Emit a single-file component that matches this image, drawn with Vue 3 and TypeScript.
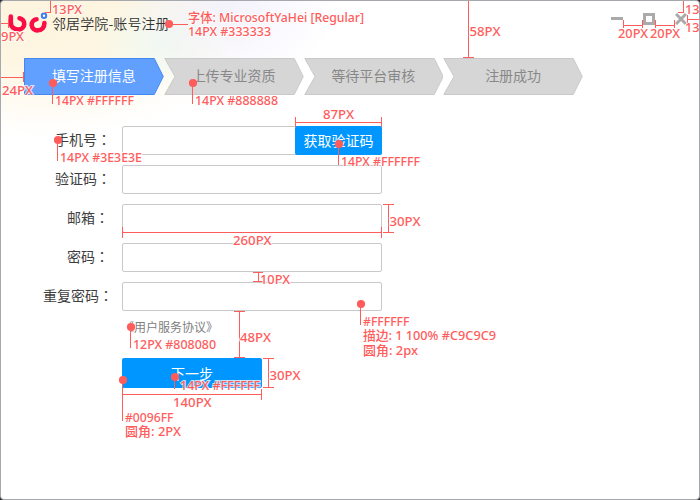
<script setup lang="ts">
interface Step { label: string; active?: boolean }
interface Field { label: string; shift: number; code?: boolean }
interface Note { x: number; y: number; w?: number; text: string }

const steps: Step[] = [
  { label: '填写注册信息', active: true },
  { label: '上传专业资质' },
  { label: '等待平台审核' },
  { label: '注册成功' },
]

const fields: Field[] = [
  { label: '手机号', shift: 2, code: true },
  { label: '验证码', shift: 2 },
  { label: '邮箱', shift: 4 },
  { label: '密码', shift: 4 },
  { label: '重复密码', shift: 0 },
]

const guides: string[] = [
  'M45 .5H55M50.5 0V12M45 12.5H51',
  'M0 23.5H8M8.5 19V28',
  'M0 77.5H24M23.5 72V82M.5 72V82',
  'M463 .5H474M463 57.5H474M468.5 0V58',
  'M623.5 20V28M642.5 20V28M623 25.5H643',
  'M655.5 20V28M674.5 20V28M655 25.5H675',
  'M678 .5H689M678 12.5H684M683.5 0V13',
  'M687.5 15V24M687 19.5H700',
  'M295.5 117V127M381.5 117V127M295 122.5H382',
  'M383 204.5H394M383 232.5H394M388.5 204V233',
  'M122 232.5H382M122.5 227V238M381.5 227V238',
  'M253 272.5H263M253 281.5H263M258.5 272V282',
  'M234 311.5H245M234 357.5H245M239.5 311V358',
  'M263 358.5H274M263 387.5H274M268.5 358V388',
  'M122 394.5H262M261.5 389V400',
  'M169 24.5H188',
  'M52.5 83V104M192.5 83V104M57.5 140V161M338.5 144V165',
  'M360.5 304V325M130.5 327V348M174.5 377V389M122.5 380V421',
]

const dots: [number, number][] = [
  [169, 24], [53, 83], [193, 83], [58, 140], [339, 144],
  [361, 304], [131, 327], [175, 377], [123, 380],
]

const notes: Note[] = [
  { x: 52, y: 13.5, w: 30, text: '13PX' },
  { x: 1, y: 40.5, w: 23, text: '9PX' },
  { x: 2, y: 94.5, w: 31, text: '24PX' },
  { x: 188, y: 22, w: 176, text: '字体: MicrosoftYaHei [Regular]' },
  { x: 188, y: 35.5, w: 83, text: '14PX #333333' },
  { x: 55, y: 104.5, w: 79, text: '14PX #FFFFFF' },
  { x: 195, y: 104.5, w: 83, text: '14PX #888888' },
  { x: 469.5, y: 35.5, w: 31, text: '58PX' },
  { x: 618, y: 37.5, w: 30, text: '20PX' },
  { x: 650, y: 37.5, w: 30, text: '20PX' },
  { x: 685, y: 13.5, w: 30, text: '13PX' },
  { x: 685, y: 31.5, w: 30, text: '13PX' },
  { x: 60, y: 161.5, w: 82, text: '14PX #3E3E3E' },
  { x: 323, y: 118.5, w: 31, text: '87PX' },
  { x: 341, y: 165.5, w: 79, text: '14PX #FFFFFF' },
  { x: 389.5, y: 225.5, w: 31, text: '30PX' },
  { x: 233, y: 244.5, w: 38.5, text: '260PX' },
  { x: 260, y: 283.5, w: 30, text: '10PX' },
  { x: 363, y: 325.5, w: 46.5, text: '#FFFFFF' },
  { x: 363, y: 339.5, w: 133, text: '描边: 1 100% #C9C9C9' },
  { x: 363, y: 355, w: 55, text: '圆角: 2px' },
  { x: 240, y: 341.5, w: 31, text: '48PX' },
  { x: 133, y: 348.5, w: 83, text: '12PX #808080' },
  { x: 269.5, y: 379.5, w: 31, text: '30PX' },
  { x: 180, y: 389.5, w: 80, text: '14PX #FFFFFF' },
  { x: 173, y: 406.5, w: 38.5, text: '140PX' },
  { x: 125, y: 421.5, w: 48.5, text: '#0096FF' },
  { x: 125, y: 435.5, w: 56, text: '圆角: 2PX' },
]
</script>

<template>
  <main class="window">
    <header class="titlebar">
      <svg class="logo" width="40" height="24" viewBox="0 0 40 24">
        <g fill="none" stroke="#fb0d45" stroke-width="4.600" stroke-linecap="round" stroke-linejoin="round">
          <path d="M2.800 6.500V12.500C2.800 17 6 19.500 11 19.500A5.700 5.700 0 0 0 11.500 8.200" />
          <path d="M28.500 9.300A5.500 5.500 0 1 0 30 20.300C34 20.300 36.400 17.500 36.400 13" />
        </g>
        <circle cx="36" cy="5.700" r="2.200" fill="#fff" stroke="#3c7df5" stroke-width="2" />
      </svg>
      <h1 class="title">邻居学院-账号注册</h1>
      <div class="controls">
        <svg width="12" height="12" viewBox="0 0 12 12"><path d="M0 5.500H12" /></svg>
        <svg width="12" height="12" viewBox="0 0 12 12"><rect x="1.500" y="1.500" width="9" height="9" /></svg>
        <svg width="12" height="12" viewBox="0 0 12 12"><path d="M1 1 11 11M11 1 1 11" /></svg>
      </div>
    </header>

    <nav class="steps">
      <div v-for="(step, i) in steps" :key="step.label" class="step" :class="{ active: step.active }">
        <svg class="shape" viewBox="0 0 140 37" preserveAspectRatio="none">
          <path :d="i === 0 ? 'M.5 .5H130.500L139.500 18.500 130.500 36.500H.5Z' : 'M.8 .5H130.500L139.500 18.500 130.500 36.500H.8L11 18.500Z'" />
        </svg>
        <span>{{ step.label }}</span>
      </div>
    </nav>

    <form class="form" @submit.prevent>
      <div v-for="f in fields" :key="f.label" class="row">
        <label :style="{ paddingRight: f.shift + 'px' }">{{ f.label }}<span class="colon">：</span></label>
        <div class="field">
          <button v-if="f.code" type="button" class="code">获取验证码</button>
        </div>
      </div>
      <a class="agreement">《用户服务协议》</a>
      <button type="submit" class="next">下一步</button>
    </form>

    <svg class="annotations" width="700" height="500" viewBox="0 0 700 500">
      <path v-for="d in guides" :key="d" class="guide" :d="d" />
      <circle v-for="d in dots" :key="d.join()" :cx="d[0]" :cy="d[1]" r="4.100" />
      <text v-for="(n, i) in notes" :key="i" :x="n.x" :y="n.y" :textLength="n.w" lengthAdjust="spacingAndGlyphs">{{ n.text }}</text>
    </svg>
  </main>
</template>

<style>
body { margin: 0; background: #2c2e30; overflow: hidden; }
</style>

<style scoped>
.window {
  position: relative;
  box-sizing: border-box;
  width: 700px;
  height: 500px;
  border: 1px solid #a5a9ad;
  border-radius: 4px;
  overflow: hidden;
  font-family: "Noto Sans", "Noto Sans CJK SC", sans-serif;
  font-size: 14px;
  background:
    radial-gradient(ellipse 110px 85px at 225px 5px, #f1effdcc, #f1effd00),
    radial-gradient(ellipse 70px 50px at 160px 42px, #f0faf0, #f0faf000),
    radial-gradient(ellipse 230px 135px at 40px 0, #fdf4df 0%, #fef6e2 45%, #fffdf700 100%),
    #fff;
}
.titlebar { display: flex; height: 57px; padding-left: 7px; }
.logo { margin-top: 9px; flex: none; }
.title {
  margin: 11px 0 0 4px;
  font: 350 14px/22px "Noto Sans CJK SC", sans-serif;
  letter-spacing: .1px;
  color: #333;
}
.controls { display: flex; gap: 20px; margin: 12px 12px 0 auto; }
.controls svg { fill: none; stroke: #aaa; stroke-width: 3; }
.steps { display: flex; width: 559px; margin-left: 23px; }
.step {
  position: relative;
  flex: 1;
  height: 37px;
  display: flex;
  align-items: center;
  justify-content: center;
  color: #888;
  font-family: "Noto Sans CJK SC", sans-serif;
  line-height: 20px;
}
.step.active { color: #fff; }
.shape { position: absolute; inset: 0; width: 100%; height: 100%; }
.shape path { fill: #d6d6d6; stroke: #c9c9c9; }
.active .shape path { fill: #62a0ff; stroke: #4088f0; }
.step span { position: relative; padding-bottom: 3px; }
.form { display: flex; flex-direction: column; gap: 10px; margin-top: 31px; }
.row { display: flex; height: 29px; }
.row label {
  box-sizing: border-box;
  width: 112px;
  margin-right: 9px;
  text-align: right;
  line-height: 26px;
  color: #3e3e3e;
  white-space: nowrap;
  font-family: "Noto Sans CJK SC", sans-serif;
}
.colon { font-family: "Noto Sans CJK TC", sans-serif; }
.field {
  box-sizing: border-box;
  width: 260px;
  border: 1px solid #c9c9c9;
  border-radius: 2px;
  background: #fff;
  display: flex;
  justify-content: flex-end;
}
button {
  border: 0;
  padding: 0;
  border-radius: 2px;
  background: #0096ff;
  color: #fff;
  font: 14px/29px "Noto Sans CJK SC", sans-serif;
}
.code { width: 87px; height: 29px; margin: -1px -1px 0 0; flex: none; }
.agreement {
  margin: -3px 0 0 121px;
  color: #808080;
  font: 12px/18px "Noto Sans CJK SC", sans-serif;
}
.next { width: 140px; height: 30px; margin: 12px 0 0 121px; line-height: 30px; }
.annotations { position: absolute; left: -1px; top: -1px; }
.guide { fill: none; stroke: #ff5c5c; stroke-width: 1; shape-rendering: crispEdges; }
.annotations circle { fill: #ff5c5c; }
.annotations text {
  fill: #ff5c5c;
  stroke: #fff;
  stroke-width: 2px;
  stroke-opacity: .75;
  paint-order: stroke;
  font-size: 12.800px;
  font-weight: 500;
}
</style>
